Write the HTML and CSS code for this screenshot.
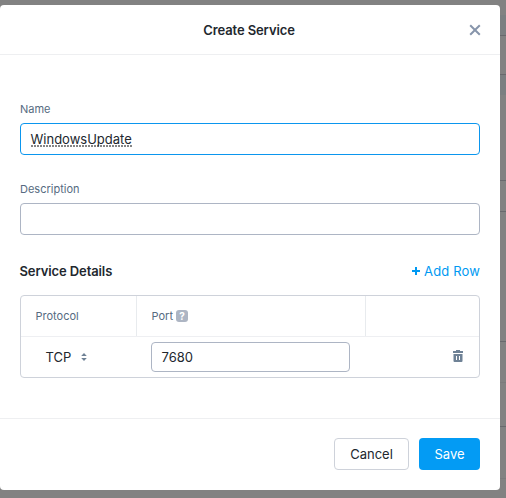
FILE: index.html
```html
<!DOCTYPE html>
<html lang="en">
<head>
<meta charset="utf-8">
<title>Create Service</title>
<link rel="stylesheet" href="styles.css">
</head>
<body>
<main class="modal">
  <header class="modal-header">
    <h1 class="title">Create Service</h1>
    <button class="close" aria-label="Close"><svg width="12" height="12" viewBox="0 0 12 12"><path d="M1.200 1.200l9.600 9.600M10.800 1.200l-9.600 9.600"/></svg></button>
  </header>
  <section class="modal-body">
    <div class="field">
      <label class="label">Name</label>
      <div class="input active"><span class="spell">WindowsUpdate</span></div>
    </div>
    <div class="field">
      <label class="label">Description</label>
      <div class="input"></div>
    </div>
    <div class="section-head">
      <h2 class="section-title">Service Details</h2>
      <a class="add"><svg width="8" height="8" viewBox="0 0 8 8"><path d="M4 0v8M0 4h8"/></svg><span>Add Row</span></a>
    </div>
    <div class="table">
      <div class="row head">
        <div class="cell">Protocol</div>
        <div class="cell"><span class="port">Port</span><span class="help">?</span></div>
        <div class="cell"></div>
      </div>
      <div class="row data">
        <div class="protocol"><span>TCP</span><svg width="6" height="8" viewBox="0 0 6 8"><path d="M3 0l2.800 3H.2zM3 8l2.800-3H.2z"/></svg></div>
        <div class="port-cell"><div class="input port-input">7680</div></div>
        <div class="remove"><svg width="10" height="12" viewBox="0 0 10 12"><path fill-rule="evenodd" d="M0 1h3V0h4v1h3v2H0zM.5 4h9v7q0 1-1 1h-7q-1 0-1-1zM3 6v4h1V6zM6 6v4h1V6z"/></svg></div>
      </div>
    </div>
  </section>
  <footer class="modal-footer">
    <button class="btn cancel">Cancel</button>
    <button class="btn save">Save</button>
  </footer>
</main>
<aside class="backdrop">
  <div class="band gap-top"></div>
  <div class="band shaded first"></div>
  <div class="band b1"></div>
  <div class="band shaded second"></div>
  <div class="band b2"></div>
  <div class="band b3"></div>
  <div class="band b4"></div>
  <div class="band b5 faint"></div>
  <div class="band b6"></div>
  <div class="band b7 faint"></div>
</aside>
</body>
</html>
```

FILE: styles.css
```css
* { box-sizing: border-box; }
body {
  margin: 0;
  width: 506px;
  height: 498px;
  overflow: hidden;
  display: flex;
  background: #828282;
  color: #22272e;
  font-family: Inter, "Liberation Sans", sans-serif;
  font-size: 13px;
}
svg { display: block; }
button { font: inherit; margin: 0; padding: 0; border: 0; background: none; color: inherit; }
.modal {
  width: 500px;
  height: 485px;
  margin-top: 5px;
  background: #fff;
  border-radius: 4px;
  display: flex;
  flex-direction: column;
}
.modal-header {
  height: 50px;
  border-bottom: 1px solid #eeeff1;
  display: grid;
  grid-template-columns: 40px 1fr 40px;
  align-items: center;
  padding-top: 1px;
}
.title {
  grid-column: 2;
  margin: 0 2px 1px 0;
  text-align: center;
  font-size: 13px;
  font-weight: 600;
  letter-spacing: -.1px;
}
.close { padding-left: 9px; }
.close path { fill: none; stroke: #8795ab; stroke-width: 2; }
.modal-body { height: 363px; padding: 46px 20px 0; }
.field { height: 80px; }
.label { display: block; height: 22px; line-height: 17px; font-size: 11px; color: #566b81; }
.input {
  height: 32px;
  border: 1px solid #adb5c4;
  border-radius: 4px;
  padding: 0 9.5px;
  line-height: 31px;
}
.input.active { border-color: #0b96ee; }
.spell {
  display: inline-block;
  height: 20px;
  line-height: 19px;
  background: repeating-linear-gradient(90deg, #858585 0 2px, transparent 2px 3px) 0 15px / 100% 2px no-repeat;
}
.section-head { display: flex; justify-content: space-between; align-items: center; height: 20px; }
.section-title { font-size: 13px; font-weight: 600; margin: -1px 0 0 -.5px; letter-spacing: -.1px; }
.add { display: flex; align-items: center; gap: 4px; color: #0099f2; letter-spacing: .15px; }
.add span { margin-top: -1px; }
.add path { stroke: #0099f2; stroke-width: 2; }
.table { height: 83px; margin-top: 14px; border: 1px solid #ced2da; border-radius: 4px; }
.row { display: grid; grid-template-columns: 116px 229px 1fr; }
.head { height: 41px; border-bottom: 1px solid #eeeff2; font-size: 11px; color: #566b81; }
.cell { display: flex; align-items: center; padding-left: 14.5px; border-right: 1px solid #e8ebee; }
.cell:last-child { border-right: 0; }
.help {
  width: 12px;
  height: 12px;
  margin-left: 3px;
  border-radius: 3px;
  background: #adb5c3;
  color: #fff;
  font-size: 10px;
  font-weight: 700;
  line-height: 12px;
  text-align: center;
}
.data { height: 40px; align-items: center; }
.protocol { display: flex; align-items: center; padding-left: 24.5px; gap: 10px; }
.protocol path, .remove path { fill: #6f8296; }
.port-cell { padding-left: 14px; }
.port-input { width: 199px; height: 30px; line-height: 29px; }
.remove { padding-left: 87px; margin-top: -2px; }
.modal-footer {
  height: 72px;
  border-top: 1px solid #eeeff1;
  padding: 19px 20px 0 0;
  display: flex;
  justify-content: flex-end;
  gap: 10px;
}
.btn { height: 32px; border-radius: 4px; }
.cancel { width: 75px; border: 1px solid #ced2da; }
.save { width: 61px; background: #039bf4; color: #fff; }
.backdrop { flex: 1; }
.band { border-bottom: 1px solid #68696d; }
.gap-top { height: 10px; margin-top: 5px; border: 0; }
.shaded { background: #7b7f81; }
.first { height: 21px; }
.b1 { height: 39px; }
.second { height: 20px; border: 0; }
.b2 { height: 86px; }
.b3 { height: 31px; }
.b4 { height: 130px; }
.b5 { height: 41px; }
.b6 { height: 44px; }
.b7 { height: 52px; }
.faint { border-color: #7b7b7c; }
```
